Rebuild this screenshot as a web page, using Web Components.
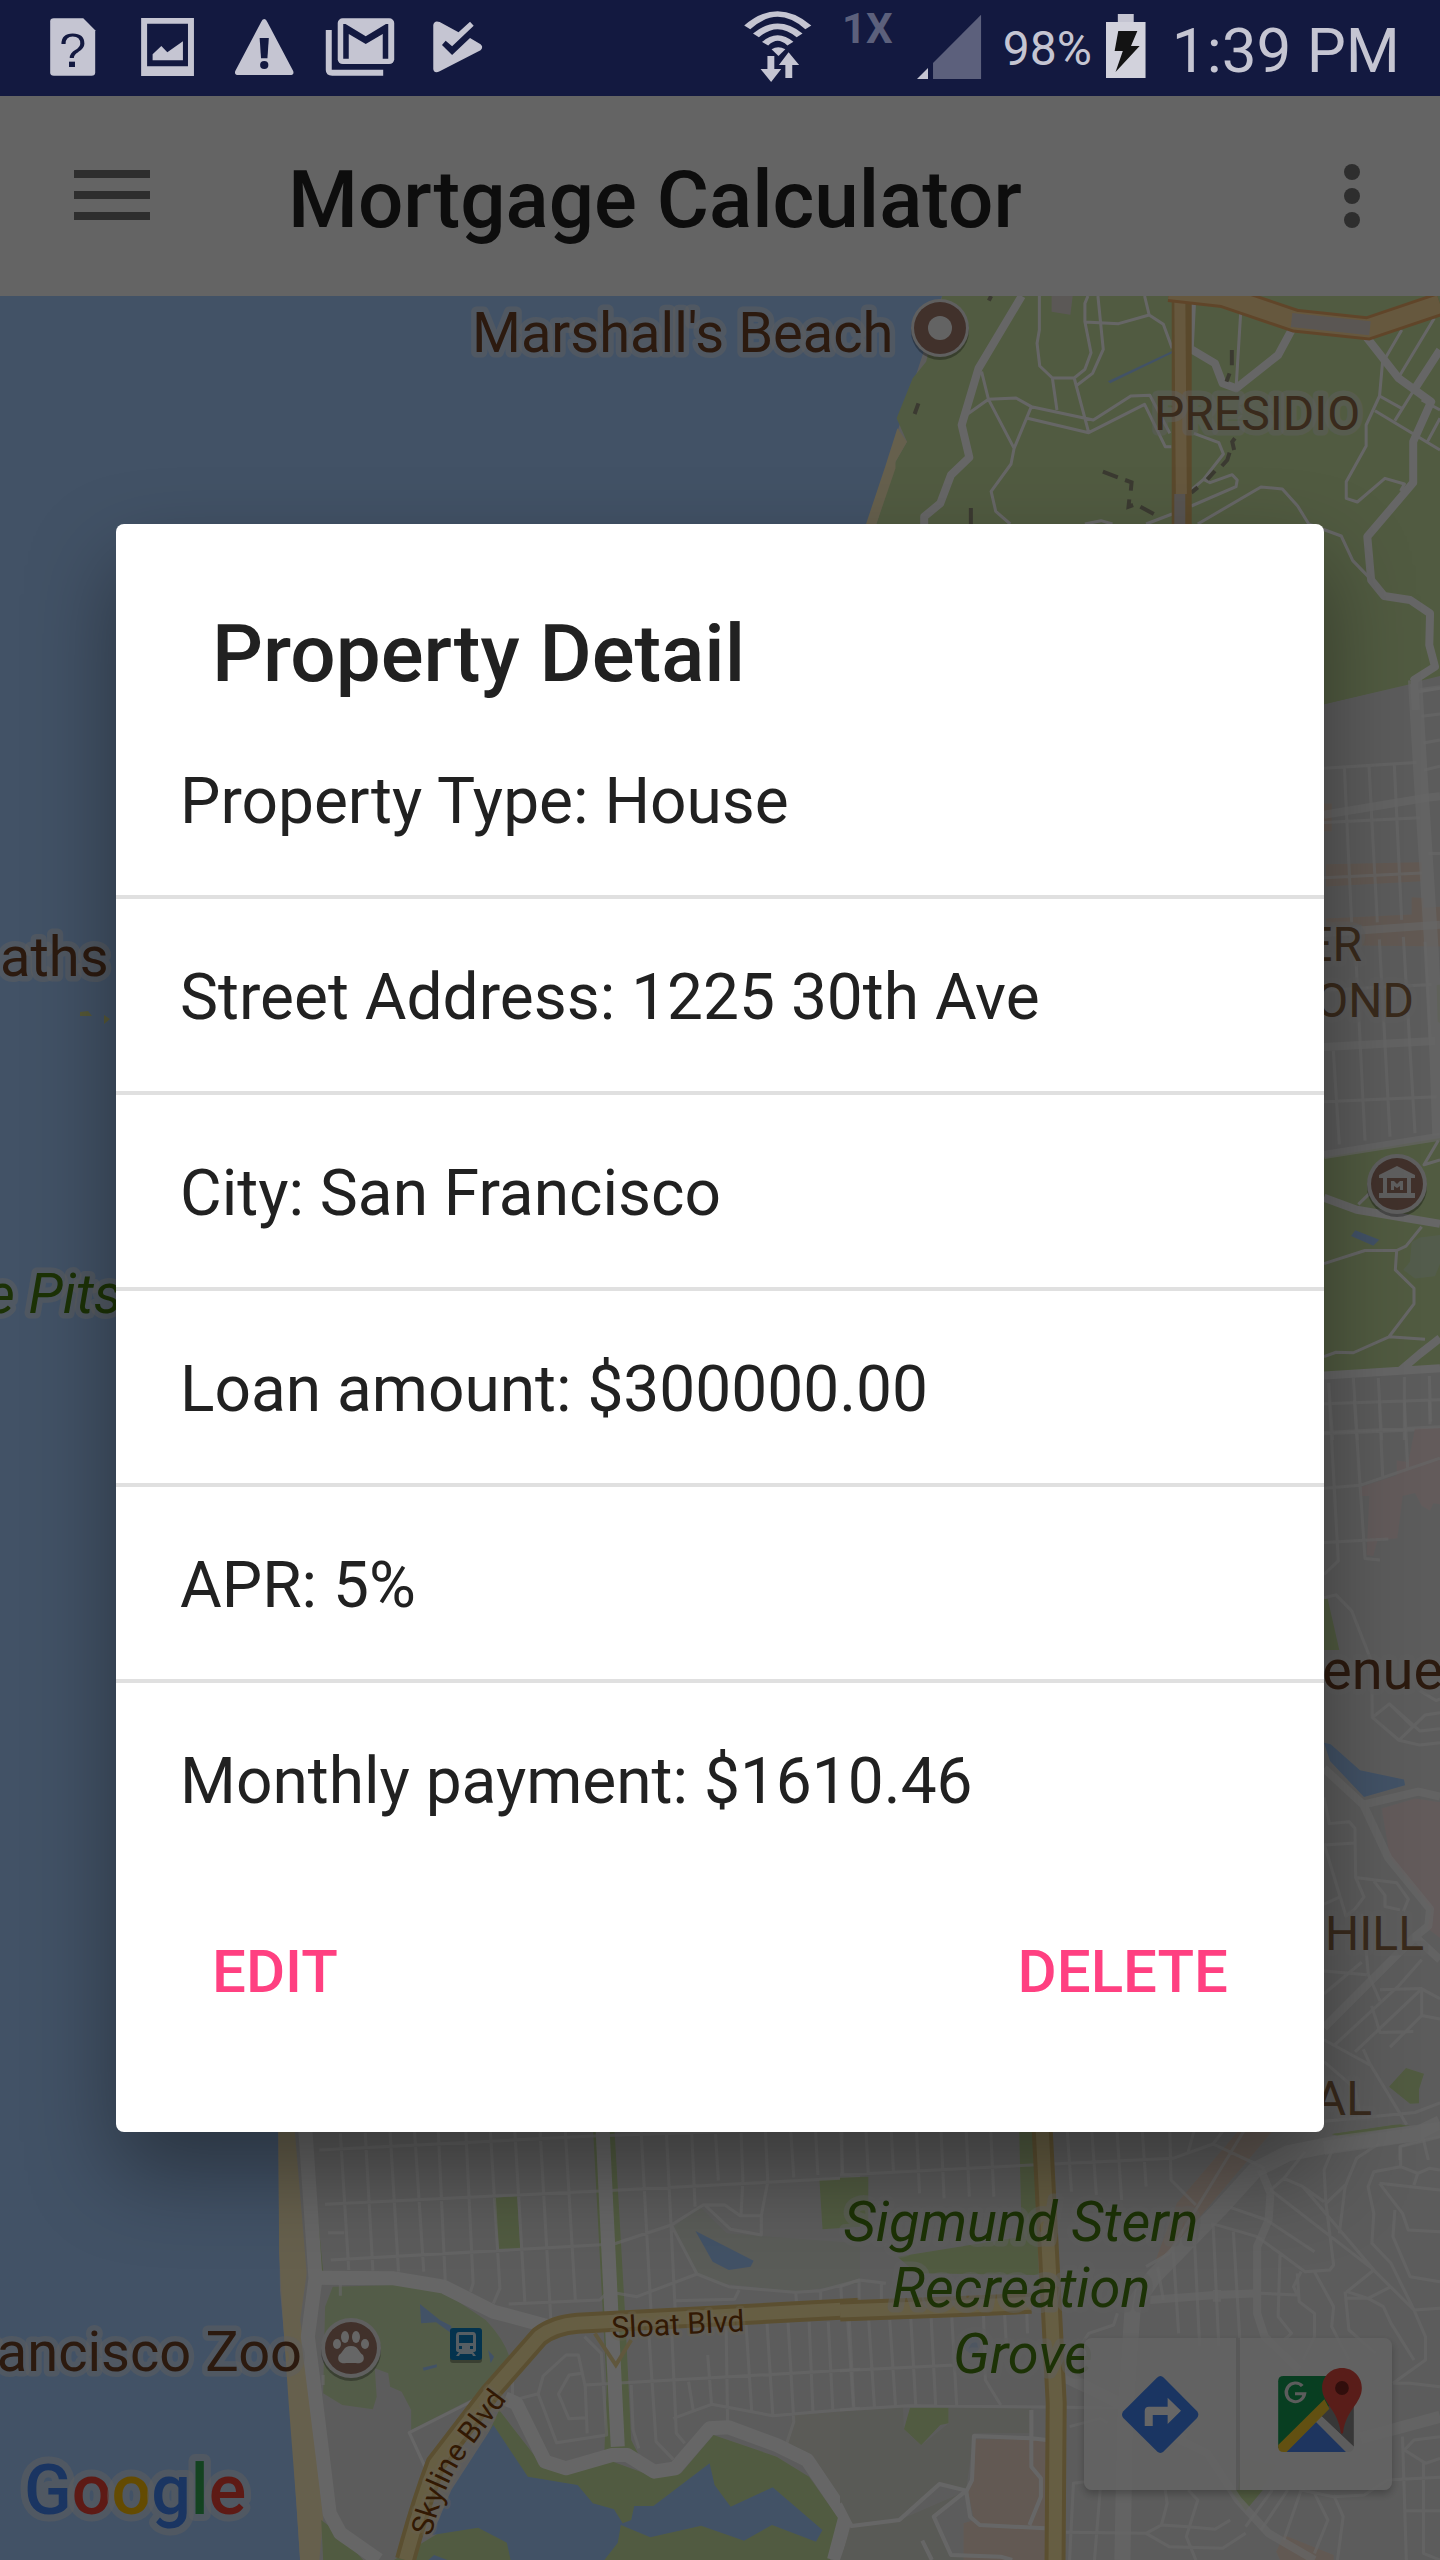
<!DOCTYPE html>
<html lang="en">
<head>
<meta charset="utf-8">
<meta name="viewport" content="width=device-width, initial-scale=1">
<title>Mortgage Calculator</title>
<style>
  html, body { margin: 0; min-height: 100%; }
  body { font-family: Roboto, "Noto Sans", sans-serif; background: #000; }
</style>
</head>
<body>
<mortgage-app>
  <status-bar slot="status"></status-bar>
  <app-bar slot="bar">Mortgage Calculator</app-bar>
  <city-map slot="content"></city-map>
  <property-dialog slot="dialog" heading="Property Detail">
    <detail-row>Property Type: House</detail-row>
    <detail-row>Street Address: 1225 30th Ave</detail-row>
    <detail-row>City: San Francisco</detail-row>
    <detail-row>Loan amount: $300000.00</detail-row>
    <detail-row>APR: 5%</detail-row>
    <detail-row>Monthly payment: $1610.46</detail-row>
    <text-button slot="actions">EDIT</text-button>
    <text-button slot="actions">DELETE</text-button>
  </property-dialog>
</mortgage-app>

<script>
const define = (name, html) => customElements.define(name, class extends HTMLElement {
  constructor() {
    super();
    const t = document.createElement('template');
    t.innerHTML = html;
    this.attachShadow({ mode: 'open' }).append(t.content.cloneNode(true));
  }
  connectedCallback() {
    const h = this.shadowRoot.querySelector('[data-heading]');
    if (h) h.textContent = this.getAttribute('heading');
  }
});

define('mortgage-app', `
<style>
  :host { display: flex; flex-direction: column; min-height: 100vh; position: relative; overflow: hidden; }
  main { flex: 1; display: flex; flex-direction: column; position: relative; }
  .scrim { position: absolute; inset: 0; background: rgba(0,0,0,.6); display: flex; align-items: center; justify-content: center; padding: 96px 116px 0; }
  ::slotted([slot=status]) { position: relative; z-index: 2; }
  ::slotted([slot=content]) { flex: 1; }
  ::slotted([slot=dialog]) { flex: 1; }
</style>
<slot name="status"></slot>
<main><slot name="bar"></slot><slot name="content"></slot></main>
<div class="scrim"><slot name="dialog"></slot></div>`);

define('status-bar', `
<style>
  :host { display: flex; align-items: center; justify-content: space-between; height: 96px; padding: 0 40px 0 24px; background: #131940; color: #c5c5d2; }
  svg { display: block; height: 96px; fill: #c5c5d2; }
  .left, .right { display: flex; align-items: center; }
  .left svg { width: 96px; }
  .net { align-self: flex-start; font-size: 42px; line-height: 58px; font-weight: 700; color: #5c607c; margin: 0 24px 0 30px; }
  .pct { font-size: 48px; margin: 0 14px 0 21px; }
  .time { font-size: 62px; margin-left: 26px; padding-top: 4px; }
</style>
<div class="left">
  <svg viewBox="52 0 209 288" preserveAspectRatio="none"><path d="M117 55H181L207 91V218Q207 227 199 227H117Q109 227 109 218V64Q109 55 117 55Z"/><path d="M138 132Q138 105 158 105Q179 105 179 131Q179 142 167 153Q156 162 156 174" fill="none" stroke="#131940" stroke-width="9"/><rect x="150" y="185" width="13" height="16" fill="#131940"/></svg>
  <svg viewBox="261 0 209 288" preserveAspectRatio="none"><path fill-rule="evenodd" d="M307 54H422V228H307ZM320 71V199H409V71Z"/><path d="M332 181V163L351 138L364 157L398 124V181Z"/></svg>
  <svg viewBox="470 0 209 288" preserveAspectRatio="none"><path d="M575 57Q579 57 582 67L638 213Q641 225 631 225H519Q509 225 512 213L568 67Q571 57 575 57Z"/><path fill="#131940" d="M565 114H585L582 175H568Z"/><ellipse cx="575" cy="195" rx="9" ry="12" fill="#131940"/></svg>
  <svg viewBox="679 0 209 288" preserveAspectRatio="none"><path d="M709 90H722V209H834V227H723Q709 227 709 210Z"/><rect x="735" y="55" width="123" height="137" rx="11" ry="14"/><path fill="#131940" d="M747 176V72H752L796 109L840 72H845V176H833V102L796 132L759 102V176Z"/></svg>
  <svg viewBox="888 0 209 288" preserveAspectRatio="none"><path d="M943 75Q945 60 957 66L998 97L1023 65L1031 77L984 139L970 122L962 135L984 165L1023 114L1046 133Q1053 141 1046 151L957 214Q945 222 943 208Z"/></svg>
</div>
<div class="right">
  <svg width="68" viewBox="55 0 148 288" preserveAspectRatio="none"><g fill="none" stroke="#c5c5d2" stroke-width="17"><path d="M62 82Q128 2 195 82M81 106Q128 52 176 106M101 131Q128 97 156 131"/></g><path d="M115 148Q129 135 145 148L130 168Z"/><path d="M106 168H121V207H136L114 246L91 207H106ZM145 234V195H131L152 157L175 195H160V234Z"/></svg>
  <span class="net">1X</span>
  <svg width="65" viewBox="422 0 142 288" preserveAspectRatio="none"><path d="M422 237L446 204V237Z"/><path fill="#5c607c" d="M457 237V189L562 44V237Z"/></svg>
  <span class="pct">98%</span>
  <svg width="40" viewBox="836 0 88 288" preserveAspectRatio="none"><path d="M862 42H897V66H862Z"/><path fill="#d2d2dc" d="M836 66H923V234H836Z"/><path fill="#131313" d="M863 93H905L891 138H910L857 216L873 153H855Z"/></svg>
  <span class="time">1:39 PM</span>
</div>`);

define('app-bar', `
<style>
  :host { display: flex; align-items: center; height: 200px; background: #fafafa; }
  button { border: 0; background: none; padding: 0; margin: 0; flex: none; width: 224px; height: 200px; }
  button.more { width: 176px; }
  svg { display: block; width: 100%; height: 100%; fill: #737373; }
  h1 { flex: 1; margin: 0; padding: 8px 0 0 64px; font-size: 80px; line-height: 96px; font-weight: 500; color: #212121; white-space: nowrap; }
</style>
<button aria-label="Open menu"><svg viewBox="0 0 224 200"><path d="M74 74h76v8H74zM74 95h76v8H74zM74 116h76v8H74z"/></svg></button>
<h1><slot></slot></h1>
<button class="more" aria-label="More options"><svg viewBox="0 0 176 200"><circle cx="88" cy="76" r="8"/><circle cx="88" cy="100" r="8"/><circle cx="88" cy="124" r="8"/></svg></button>`);

define('property-dialog', `
<style>
  :host { display: block; background: #fff; border-radius: 8px; color: #212121; box-shadow: 0 40px 88px rgba(0,0,0,.38); }
  h2 { margin: 0; padding: 82px 96px 1px; font-size: 80px; line-height: 96px; font-weight: 500; }
  footer { display: flex; justify-content: space-between; padding: 21px 80px 88px; }
</style>
<section role="dialog" aria-label="Property Detail">
<h2 data-heading></h2>
<slot></slot>
<footer><slot name="actions"></slot></footer>
</section>`);

define('detail-row', `
<style>
  :host { display: flex; align-items: center; box-sizing: border-box; height: 196px; padding: 6px 64px 0; border-bottom: 4px solid #e0e0e0; font-size: 64px; line-height: 76px; }
  :host(:nth-of-type(6)) { border-bottom-color: transparent; }
</style>
<slot></slot>`);

define('text-button', `
<style>
  :host { display: block; }
  button { border: 0; background: none; font: 500 60px/72px Roboto, sans-serif; color: #ff4081; height: 144px; padding: 0 16px; margin: 0; display: block; }
</style>
<button><slot></slot></button>`);

define('map-toolbar', `
<style>
  :host { display: flex; gap: 4px; border-radius: 8px; background: rgba(215,215,215,.7); box-shadow: 0 4px 8px rgba(0,0,0,.25); overflow: hidden; }
  button { border: 0; margin: 0; padding: 0; width: 152px; height: 152px; background: rgba(255,255,255,.72); }
  svg { display: block; width: 152px; height: 152px; }
</style>
<button aria-label="Directions"><svg viewBox="638 654 398 456" preserveAspectRatio="none"><path fill="#4285f4" d="M829 773Q838 763 847 773L934 874Q941 884 934 894L847 994Q838 1004 829 994L741 894Q734 884 741 874Z"/><path fill="#fff" d="M797 918V873Q797 860 808 860H857V833L892 872L857 912V885H818V918Z"/></svg></button>
<button aria-label="Open in Maps"><svg viewBox="1045 654 398 456" preserveAspectRatio="none">
<path fill="#149c53" d="M1159 768H1290V860L1145 985V784Q1145 768 1159 768Z"/><path fill="#8a8a8a" d="M1255 885L1300 830H1343V980Z"/><path fill="#4b86ee" d="M1165 996L1244 905L1323 996Z"/><path fill="#e8e8e8" d="M1244 905L1255 885L1343 980Q1343 996 1328 996H1323Z"/><path fill="#f5c92c" d="M1145 975L1266 838L1279 866L1167 996H1159Q1145 996 1145 980Z"/>
<path d="M1208 798A24 28 0 1 0 1214 821H1189" fill="none" stroke="#e6e6e6" stroke-width="9"/>
<path fill="#df4a40" d="M1312 744C1343 744 1364 772 1364 804C1364 850 1322 870 1315 938Q1312 944 1309 938C1302 870 1260 850 1260 804C1260 772 1281 744 1312 744Z"/><ellipse cx="1312" cy="804" rx="18" ry="21" fill="#7a231f"/></svg></button>`);

define('city-map', `
<style>
  :host { display: block; position: relative; overflow: hidden; background: #a5cdff; }
  .map { position: absolute; inset: 0; width: 100%; height: 100%; }
  map-toolbar { position: absolute; right: 48px; bottom: 70px; }
  .map path { vector-effect: non-scaling-stroke; }
  .r { fill: none; stroke: #fff; stroke-linejoin: round; }
  .w1 { stroke-width: 3px; } .w2 { stroke-width: 8px; } .w3 { stroke-width: 14px; } .soft { opacity: .7; }
  .park { fill: #cae4a2; } .water { fill: #a5cdff; } .sand { fill: #ffefc0; } .shop { fill: #f5dfcf; } .pink { fill: #f7e3e3; }
  .hc { fill: none; stroke: #e3c67a; stroke-width: 21px; } .hf { fill: none; stroke: #ffeaa8; stroke-width: 13px; }
  .dash { fill: none; stroke: #94917c; stroke-width: 4px; }
  text { paint-order: stroke; stroke: rgba(235,235,235,.5); stroke-width: 11px; stroke-linejoin: round; font-size: 56px; fill: #6e4327; }
  .area { font-size: 48px; fill: #8f6947; } .green { fill: #467d10; font-style: italic; } .road { font-size: 30px; fill: #7d4008; stroke-width: 6px; stroke: rgba(255,240,200,.4); }
  .logo { font-size: 70px; font-weight: 500; stroke-width: 14px; }
</style>
<svg class="map" viewBox="0 296 1440 2264" preserveAspectRatio="xMidYMid slice" role="img" aria-label="Map of San Francisco">
  <path fill="#e7e7e7" d="M942 296L867 524L278 2131L280 2290L290 2400L300 2560H1440V296Z"/>

  <svg x="840" y="290" width="600" height="420" viewBox="0 0 1568 1260" preserveAspectRatio="none">
    <path class="park" d="M267 18L225 215L190 265L148 385L175 455L145 515L95 702V1260H1200L1265 1243L1568 1158V18Z"/>
    <path class="sand" d="M150 415L175 455L145 515V535L95 702H68L118 530Z"/>
    <path fill="#e4dcd8" d="M553 18H608L602 74L553 65Z"/>
    <path class="r w1" d="M521 18V120L515 160L522 228L555 264H612L640 238L656 188L640 95V40L648 18M674 18L688 178L660 250L620 285M640 96L728 101L808 75L796 18M808 75L845 103L868 175M555 264L567 360M612 264L650 428L490 385M370 245L388 328L330 375M388 328L460 324L500 350L662 390L760 318L810 316L862 430M650 428L796 343L850 470H866M388 328L455 475L500 350M455 475L447 522L395 604L407 664L445 702M925 430L990 458L1002 492L950 568L967 578L1025 554L1038 570L1035 590L918 648M950 568L918 600M935 702L1100 591L1156 597L1196 648L1225 702L1310 738L1340 812L1385 865M800 702L868 672M640 702L682 692L712 702M1047 70L1035 295M1418 215L1410 318L1375 405V468L1323 575V625L1352 636L1424 565L1475 582L1465 603M1410 318L1468 355M1398 362L1568 480M1468 120L1425 205M1553 85L1460 262M1500 300L1450 392M1568 360L1520 330M1568 385L1535 455M1510 1205L1568 1195"/>
    <path class="r w2" d="M475 18L362 235L318 405L338 502L290 555L262 640L220 680V702M920 35L914 175L980 220L1000 280L1035 295L1145 195L1185 110M1375 140L1460 265L1545 335L1498 455V578L1378 740L1388 870L1422 918L1490 930L1542 970L1540 1065L1555 1130L1500 1170L1505 1260M1568 180L1500 300"/>
    <path class="water" d="M700 274L868 183V190L706 280Z"/>
    <path class="dash" d="M1024 180V226M1018 250L1010 275M1032 445L1025 455L1030 480M1018 488L1012 510L998 528M980 543L960 568M935 592L918 608M687 545L726 562M745 570L762 577L760 602M756 628L754 650L766 645M785 650L820 672M342 654V702M205 340L195 372M395 18L389 32"/>
    <path d="M893 18V702" fill="none" stroke="#e0b66e" stroke-width="20"/><path d="M888 18L892 612" fill="none" stroke="#ffdc9c" stroke-width="11"/><path d="M888 612V702" fill="none" stroke="#dcd2ca" stroke-width="11"/>
    <path d="M860 0L1000 18L1190 92L1380 115L1568 42" fill="none" stroke="#efad68" stroke-width="24"/><path d="M860 0L1000 18L1190 92L1380 115L1568 42" fill="none" stroke="#ffdc9c" stroke-width="18"/><path d="M1180 90L1385 115" fill="none" stroke="#e1d7cf" stroke-width="14"/>
  </svg>

  <svg x="1300" y="680" width="140" height="760" viewBox="0 0 420 1568" preserveAspectRatio="none">
    <path class="park" d="M72 0H333V8L72 50ZM72 985L420 945V1415L72 1430ZM410 630L420 628V708L413 705Z"/>
    <path class="shop" d="M72 255H95V312H72ZM78 380L365 376V415L78 426ZM78 492L335 484V448L370 450V470L420 468V550L185 548V505L78 507Z"/>
    <path class="r w1 soft" d="M72 182L350 170M72 294L360 284M72 408L365 398M72 870L410 860M72 640L395 628M133 180L155 500M207 178L232 500M283 176L305 495M358 20L420 14M365 75L420 70M370 130L420 124M372 186L420 178M385 358H420M165 535L195 950M238 535L270 942M310 530L345 935M100 765L118 958M375 540L390 740M86 1450L98 1568M160 1440L172 1568M235 1440L245 1568M313 1438V1568M388 1436L392 1530M72 1493L420 1485M72 1555L420 1545"/>
    <path class="r w2 soft" d="M72 278L380 243L420 240M72 522L420 505M72 757L405 745M72 980L420 942"/>
    <path class="r w3 soft" d="M345 0L362 200L395 560L410 780L418 940"/>
    <path class="r w1" d="M72 1204L195 1177H290L318 1168L365 1128M290 1177L286 1217L342 1255V1287L267 1355L160 1388L108 1387L72 1396M267 1355L375 1360M215 1055L175 1082M415 950L372 1000L420 990"/>
    <path class="r w2" d="M72 1068L170 1093L420 1122M72 1435L300 1425L420 1420M300 1425L360 1390L420 1358"/>
    <path class="water" d="M166 1135L238 1155L220 1167L153 1147Z"/>
    <path fill="#cfe6bd" d="M335 1160L360 1150L420 1145V1205L405 1230L345 1235L310 1217L330 1200Z"/>
  </svg>

  <svg x="1300" y="1400" width="140" height="760" viewBox="0 0 420 1568" preserveAspectRatio="none">
    <path class="pink" d="M180 198V180L290 155V125L325 128L345 58H420V215L400 213L390 228L365 218L345 192L308 198L292 285L232 290L220 322L200 320L208 198ZM245 843L345 822L420 830V1110L382 1090L395 1050L270 945Z"/>
    <path class="park" d="M72 410H83L118 516H72ZM267 1417L318 1378L372 1390L357 1422V1451L330 1452ZM95 1515L300 1494L320 1497L150 1518Z"/>
    <path class="water" d="M72 707L92 710L180 764L312 783L315 795L192 819L90 745Z"/>
    <path class="r w1 soft" d="M88 0L115 332L72 360M163 0L195 327L240 330M238 0L248 158M313 0L323 140M388 0L390 50M72 67L420 55M72 182L180 176L420 120M72 294L265 287M72 408L108 402L155 435L215 540L217 655L297 702L375 650L420 645M217 655L268 627L340 675M297 702L360 712L420 707M268 627L360 683L420 678M360 600L408 620L420 617M72 820L88 874L148 870L165 884L167 985L192 1025L165 1050L138 1065L72 915M72 918L165 914M167 985L290 996L325 1030L310 1055M222 993L255 1022V1045L300 1052M72 1040L120 1025M185 1060L195 1110L205 1185M72 1178L200 1186M72 1225L185 1160M105 1330L297 1208L365 1155M165 1345L365 1215L420 1235M365 1215V1270L420 1277M365 1270L270 1335M205 1185L240 1240M215 1250L240 1305L340 1303M240 1217L365 1214M72 1365L165 1420L180 1475M190 1340L210 1370L320 1495M72 1320L210 1372M72 1488L345 1470L420 1450M300 1568V1540L370 1525L385 1568"/>
    <path class="r w2 soft" d="M72 760L190 835L265 945L390 1050L385 1085L345 1107L72 1295M190 835L355 808L420 818M345 1107L420 1155"/>
    <path class="r w3 soft" d="M72 1543L200 1530L345 1515L420 1490"/>
  </svg>

  <svg x="260" y="2120" width="600" height="440" viewBox="0 0 1568 1320" preserveAspectRatio="none">
    <path class="sand" d="M48 20H90L122 460L105 600L135 850L150 1020L165 1195L155 1320H105L95 1150L75 850L60 600L50 400Z"/>
    <path class="park" d="M122 20H128L165 452H159ZM612 233L672 228L680 385L625 388ZM1462 180L1568 175V320L1470 328ZM870 20H884L950 600L965 960L990 1005L900 995L906 800ZM912 20H926L955 600L970 960L990 1005L930 900Z"/>
    <path fill="#d0e6b4" d="M190 500L350 495L480 515L590 600Q640 660 655 720L615 760L600 810L395 930V870L370 815L340 800L335 760L300 745L305 830L295 868L215 855L165 820L170 560Z"/>
    <path fill="#dce5d6" d="M1080 320L1150 260L1220 340L1568 370V490L1400 515L1200 490L1140 460Z" opacity=".6"/>
    <path fill="#e3e3d9" d="M1395 885L1568 870V1320H1520L1430 1040L1370 980Z"/>
    <path class="park" d="M625 870L740 1040L810 1055L910 1020L1030 1070L1100 1060L1185 945L1350 1010L1435 1070L1515 1200L1490 1320H350L480 1230ZM160 1200L205 1240L270 1320H165Z"/>
    <path class="water" d="M610 915L700 1070L830 1095L870 1150L925 1168L948 1210L970 1200L978 1158H1028L1175 1030L1188 1095L1230 1160L1340 1102L1470 1230L1453 1265L1338 1215L1265 1262L1153 1217L1020 1252L943 1215L935 1268L900 1320H655L645 1268L570 1223L450 1245L500 1110ZM455 1305L490 1320H440ZM1138 333L1290 422L1282 440L1225 450L1183 425ZM418 552L470 600L500 618V640L460 607L421 610ZM425 743L462 733V742L428 752ZM596 690L612 710L603 730Z"/>
    <path class="r w1 soft" d="M155 90L870 48L1568 20M170 253L940 210L1568 172M178 338H220M185 420L925 372L1075 315L1158 255H1215L1255 287H1310V345L1230 328L1165 258M210 40L232 450M275 38L295 452M340 36L362 455M404 35L428 455M466 34L484 480M538 34L557 490L550 515M602 34L627 505L610 550M666 34L692 545M732 34L760 600M798 34L824 540M650 552L888 540L910 515L985 530L1142 462L1075 315M996 34L1022 575M1062 34L1085 570M1128 34L1137 260M1190 34L1198 182M1257 34L1262 182L1257 285M1321 34L1327 185L1310 287M1387 34L1395 172M1452 34L1458 165M1518 34L1523 165M1142 462L1225 500L1398 517L1465 512L1568 480M1085 542L1240 538L1252 510M1400 517L1403 560M1465 512V555M1518 500L1520 548M848 795L1568 748M848 650L892 700L906 945L775 968L727 822L740 768L800 705H832L850 800L855 940M850 893L807 896L780 822L808 765L842 760M680 835L725 822M660 825V770M1015 620L1035 965L1080 1018M1075 610L1088 940L1110 970M1080 895L1180 853L1340 887L1568 865M1120 785L1132 870M1170 705L1180 853M1218 610L1222 910M1270 610L1285 875M1325 610L1340 885M1380 608L1395 905L1375 975M1435 605L1445 875M1485 605L1497 870M1540 600L1552 865M970 795L975 930L990 985M210 495V527M165 765V795"/>
    <path class="r w3" d="M118 20L145 475L125 650L150 880L165 1020L182 1180L210 1240L310 1320"/><path class="r w3" d="M895 20L935 980"/>
    <path class="r w3" d="M130 473L350 475L480 500L610 575L740 615L760 620M640 835L670 850L745 1025L800 1045L920 1005L960 1005L1030 1055L1085 1045L1175 925L1225 922L1350 975L1430 1020L1530 1190L1500 1320"/>
    <path class="r w1" d="M560 840L390 938L435 1050M1540 1215L1568 1225"/>
    <path class="hc" d="M380 1320Q420 1150 460 1030L600 820L730 650Q770 615 830 610L1568 565"/><path class="hf" d="M380 1320Q420 1150 460 1030L600 820L730 650Q770 615 830 610L1568 565"/>
    <path d="M875 640L930 735L970 660" fill="none" stroke="#f0d998" stroke-width="4"/>
  </svg>

  <svg x="840" y="2120" width="600" height="440" viewBox="0 0 1568 1320" preserveAspectRatio="none">
    <path class="park" d="M0 173L74 170V300L0 312ZM468 20H505L520 465L200 460L150 410L475 350ZM183 863H284V910L262 915L212 976L167 928ZM1020 1110H1105L1060 1172ZM1285 42L1450 14L1490 17L1300 48Z"/>
    <path fill="#d5e6bd" d="M1050 1015L1140 1035L1100 1110H1040Z"/>
    <path fill="#dfe1d7" d="M0 875L165 862L167 928L212 976L284 910V863L500 865V940H350L330 1110L260 1090L155 1200L30 1215L0 1150ZM0 1320L30 1220L155 1200L325 1115L245 1190L290 1305L440 1320Z"/>
    <path class="shop" d="M352 958H540V1320H323V1210L350 1200L335 1115L350 1075ZM1040 34H1130L860 400L825 420L880 250ZM1160 1245L1290 1305V1320H1150L1140 1295Z"/>
    <path class="r w1 soft" d="M0 165L500 135L870 115L975 72L1085 130M5 34V165M68 34L74 162M134 34L140 160M200 34L208 220M264 34L272 235M330 34L338 230M394 34L402 230M594 34L605 215M658 34L670 225M724 34L736 240M790 34L800 200M862 34L865 180L930 255M925 34L910 95M1000 34L975 72L1110 145M1055 34L860 400L800 440M0 500L50 480L120 490M50 485V540M108 490V545M0 752L300 735M0 870L180 857L590 862L770 865M20 600L35 860M75 600L90 860M130 600L145 857M185 595L198 857M238 590L250 857M292 588L305 857M375 585L380 780L420 855M430 580L435 680M488 575L490 640M870 380L885 640M925 330L940 680M975 310L990 680M1028 335L1045 660M830 440L845 540M970 310L1090 350L1150 400L1215 455L1280 450L1290 435L1270 250L1265 150L1290 80M1020 262L1115 300L1240 395M1125 210L1390 445L1500 570L1530 650V720L1445 790M1215 95L1160 175L1210 200L1265 245M1160 175L1125 210M1210 200L1395 450M1325 190L1270 250M1410 70L1350 115L1320 200L1305 340M1568 150L1540 145L1510 160L1465 140L1395 155L1380 200L1395 280L1390 370L1440 430L1500 570L1568 565M1510 160L1500 195M1410 190L1568 210M1410 190L1470 280L1485 330L1568 335M1450 270L1445 350L1490 470L1568 485M1465 140V80L1568 50M1440 500L1380 535L1325 515L1395 450M1325 535H1380L1420 560L1440 610L1500 720M1320 515L1330 630L1400 700M1100 520L1195 525L1185 500L1205 455M1150 400L1145 590L1180 640L1160 660M1195 460L1200 545L1240 580V650L1210 720M1240 455L1290 560L1285 620L1330 720M640 1085L610 1090L600 1320M590 1237L800 1240L860 1280L1000 1285L1060 1240M800 1240L840 1215L910 1220L980 1228L1020 1200M850 1110L855 1150L840 1215M910 1110L935 1140L905 1250L930 1320M680 1110L665 1320M1130 1110L1060 1220M1170 1110L1100 1230M1205 1110L1160 1260M1240 1120L1275 1200L1240 1300M1290 1125L1315 1190L1300 1320M1205 1110L1290 1130L1370 1125L1430 1080L1568 1072M1445 790H1490L1568 800M1470 950L1480 1320M1568 950L1500 960L1475 990L1530 1030L1568 1015M1525 1030V1300L1568 1320M1480 1172H1568M600 920L680 895L700 910M575 770L650 640L715 615L725 580"/>
    <path class="r" stroke-width="4" d="M540 960L500 955L350 948L345 1080L330 1115L340 1190L365 1215L535 1225M500 870V1040L525 1075V1130L495 1215M0 1150L30 1218L155 1200L260 1092L330 1112L245 1190L290 1305L420 1310L450 1320M215 1262L240 1320"/>
    <path class="r w2 soft" d="M1100 150L1125 220L1120 300L1090 380V580L1110 650L1200 750M810 540L980 525L1095 520M870 950L960 1000L1040 1140L1120 1240L1240 1320M985 510V545"/>
    <path class="r soft" stroke-width="16" d="M1568 30L1300 70L1170 100L1085 150L990 270L820 470L765 560L745 900L738 1320"/>
    <path class="r soft" stroke-width="12" d="M580 765L750 860L900 960M1360 955L1568 890"/>
    <path class="hc" d="M0 573L300 560L500 550"/><path class="hf" d="M0 573L300 560L500 550"/>
    <path class="hc" d="M528 20L545 400L565 850L562 1320"/><path class="hf" d="M528 20L545 400L565 850L562 1320"/>
    <ellipse cx="345" cy="672" rx="22" ry="28" fill="#c4d8f2"/>
  </svg>

  <path fill="#d8dc8a" d="M80 1012l8-1 4 5h-12zM104 1015l6 4-6 5z"/>

  <text x="472" y="352">Marshall's Beach</text>
  <text class="area" x="1154" y="430">PRESIDIO</text>
  <text class="area" x="1362" y="961" text-anchor="end">OUTER</text>
  <text class="area" x="1414" y="1017" text-anchor="end">RICHMOND</text>
  <text x="1322" y="1689">enue</text>
  <text class="area" x="1325" y="1950">HILL</text>
  <text class="area" x="1372" y="2115" text-anchor="end">AL</text>
  <text x="0" y="976">aths</text>
  <text class="green" x="-14" y="1313">e Pits</text>
  <text x="302" y="2371" text-anchor="end">rancisco Zoo</text>
  <text class="green" x="1021" y="2241" text-anchor="middle">Sigmund Stern</text>
  <text class="green" x="1021" y="2307" text-anchor="middle">Recreation</text>
  <text class="green" x="1023" y="2373" text-anchor="middle">Grove</text>
  <text class="road" transform="translate(612 2338) rotate(-3)">Sloat Blvd</text>
  <path id="skyline" fill="none" d="M431 2537Q444 2484 464 2457L520 2382"/>
  <text class="road"><textPath href="#skyline">Skyline Blvd</textPath></text>
  <text class="logo" x="24" y="2514"><tspan fill="#4285f4">G</tspan><tspan fill="#ea4335">o</tspan><tspan fill="#fbbc05">o</tspan><tspan fill="#4285f4">g</tspan><tspan fill="#34a853">l</tspan><tspan fill="#ea4335">e</tspan></text>

  <g transform="translate(940 328)"><circle cy="3" r="29" fill="#000" opacity=".3"/><circle r="29" fill="#eee"/><circle r="26" fill="#a37a6c"/><circle r="12" fill="#f8f8f8"/></g>
  <g transform="translate(351 2348)"><circle cy="3" r="30" fill="#000" opacity=".3"/><circle r="30" fill="#eee"/><circle r="26" fill="#a37a6c"/><g fill="#fff"><ellipse cx="-14" cy="-4" rx="4" ry="5"/><ellipse cx="-6" cy="-11" rx="4" ry="6"/><ellipse cx="5" cy="-11" rx="4" ry="6"/><ellipse cx="14" cy="-4" rx="4" ry="5"/><path d="M0-2C8-2 7 4 12 7C15 14 9 16 5 15H-5C-9 16-15 14-12 7C-7 4-8-2 0-2Z"/></g></g>
  <g transform="translate(1397 1184)"><circle cy="3" r="30" fill="#000" opacity=".3"/><circle r="30" fill="#eee"/><circle r="26" fill="#a37a6c"/><path fill="#eee" fill-rule="evenodd" d="M0-18L18-9V-6H14V9H18V14H-18V9H-14V-6H-18V-9ZM-10-6V9H10V-6Z"/><path fill="#eee" d="M-6 6V-3H-3L0 0L3-3H6V6H3V2L0 4L-3 2V6Z"/></g>
  <g transform="translate(450 2328)"><rect y="3" width="32" height="32" rx="3" fill="#000" opacity=".3"/><rect width="32" height="32" rx="3" fill="#0a7fc4"/><path fill="#d8ecf8" fill-rule="evenodd" d="M9 4H23Q26 4 26 8V22Q26 24 23 24L26 28H23L22 26H10L9 28H6L9 24Q6 24 6 22V8Q6 4 9 4ZM9 7V15H23V7ZM9 18V21H12V18ZM20 18V21H23V18Z"/></g>
</svg>
<map-toolbar></map-toolbar>`);
</script>
</body>
</html>
